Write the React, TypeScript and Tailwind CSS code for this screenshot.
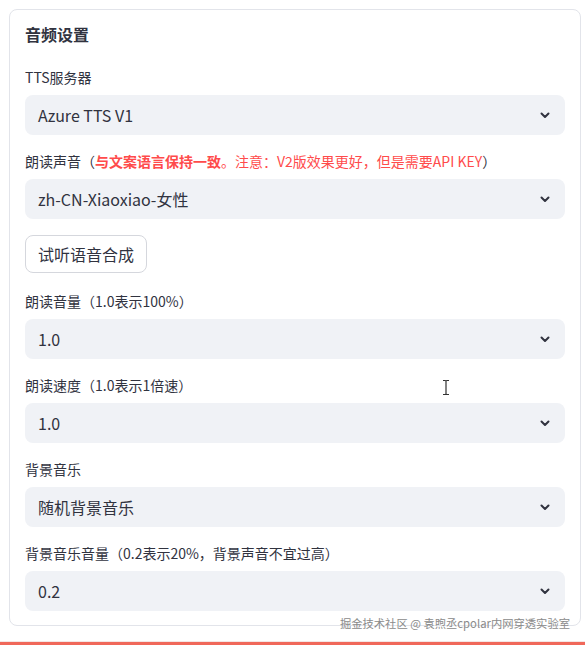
import React from "react";

const FONT = {
  fontFamily: '"Noto Sans CJK SC", "Noto Sans", sans-serif',
};

function Chevron() {
  return (
    <svg width="12" height="12" viewBox="0 0 12 12" className="shrink-0">
      <path d="M2.5 4.5 L6 8 L9.5 4.5" fill="none" stroke="#31333f" strokeWidth="2" strokeLinecap="round" strokeLinejoin="round" />
    </svg>
  );
}

function Select({ value }: { value: string }) {
  return (
    <div className="flex h-10 items-center justify-between rounded-lg bg-[#f0f2f6] pl-[13px] pr-[14px] text-[16px] text-[#31333f]">
      <span>{value}</span>
      <Chevron />
    </div>
  );
}

function Field({ label, value }: { label: React.ReactNode; value: string }) {
  return (
    <div className="flex flex-col">
      <div className="mb-2 h-5 text-[14px] leading-5 text-[#31333f]">{label}</div>
      <Select value={value} />
    </div>
  );
}

export default function App() {
  return (
    <div style={FONT} className="relative flex h-[645px] w-[585px] flex-col overflow-hidden bg-white">
      <div className="ml-[9px] mt-[9px] w-[572px] rounded-lg border border-[#e2e4ea] px-[15px] pb-[14px] pt-[12px]">
        <div className="mb-[21px] h-6 text-[16px] font-bold leading-6 text-[#31333f]">音频设置</div>
        <div className="flex flex-col gap-4">
          <Field label="TTS服务器" value="Azure TTS V1" />
          <Field
            label={
              <span>
                朗读声音（
                <span className="font-bold text-[#ff4b4b]">与文案语言保持一致</span>
                <span className="text-[#ff4b4b]">。注意：V2版效果更好，但是需要API KEY</span>）
              </span>
            }
            value="zh-CN-Xiaoxiao-女性"
          />
          <div className="mb-[2px]">
            <button className="h-[38px] rounded-lg border border-[#d5d7dd] bg-white px-3 text-[16px] text-[#31333f]">
              试听语音合成
            </button>
          </div>
          <Field label="朗读音量（1.0表示100%）" value="1.0" />
          <Field label="朗读速度（1.0表示1倍速）" value="1.0" />
          <Field label="背景音乐" value="随机背景音乐" />
          <Field label="背景音乐音量（0.2表示20%，背景声音不宜过高）" value="0.2" />
        </div>
      </div>
      <div className="mt-auto h-px bg-[#f3e6e4]" />
      <div className="h-[3px] bg-[#f0685a]" />

      <div className="pointer-events-none absolute right-[15px] top-[615px] text-[11.3px] leading-4 text-[#8a8a8a]">
        掘金技术社区 @ 袁煦丞cpolar内网穿透实验室
      </div>

      <svg className="pointer-events-none absolute left-[441px] top-[379px]" width="10" height="17" viewBox="0 0 10 17">
        <path d="M2 1.5 H4.2 Q5 1.5 5 2.5 V14.5 Q5 15.5 4.2 15.5 H2 M8 1.5 H5.8 Q5 1.5 5 2.5 M5 14.5 Q5 15.5 5.8 15.5 H8" fill="none" stroke="#333" strokeWidth="1.2" />
      </svg>
    </div>
  );
}
